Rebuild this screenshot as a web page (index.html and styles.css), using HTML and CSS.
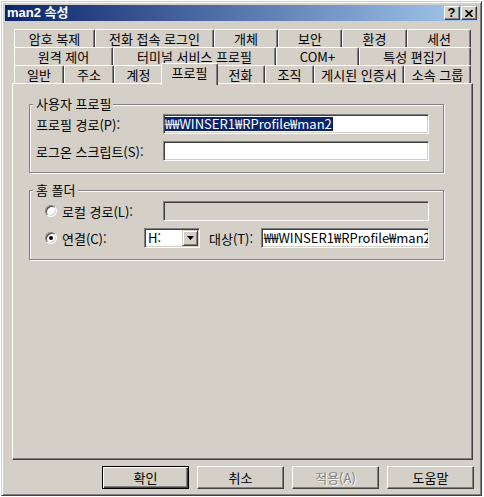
FILE: index.html
```html
<!DOCTYPE html>
<html lang="ko">
<head>
<meta charset="utf-8">
<title>man2 속성</title>
<link rel="stylesheet" href="styles.css">
</head>
<body>
<div class="desktop">
  <div class="window">
    <div class="titlebar">
      <span class="title">man2 속성</span>
      <div class="caption-btns">
        <span class="cap-btn help">?</span>
        <span class="cap-btn close"><svg width="8" height="7" viewBox="0 0 8 7"><path d="M0.5 0 L7.5 7 M7.5 0 L0.5 7" stroke="#000" stroke-width="1.7" fill="none"/></svg></span>
      </div>
    </div>
    <div class="client">
      <div class="tabs">
        <div class="tabrow row1">
          <div class="tab">암호 복제</div>
          <div class="tab">전화 접속 로그인</div>
          <div class="tab">개체</div>
          <div class="tab">보안</div>
          <div class="tab">환경</div>
          <div class="tab">세션</div>
        </div>
        <div class="tabrow row2">
          <div class="tab">원격 제어</div>
          <div class="tab">터미널 서비스 프로필</div>
          <div class="tab">COM+</div>
          <div class="tab">특성 편집기</div>
        </div>
        <div class="tabrow row3">
          <div class="tab">일반</div>
          <div class="tab">주소</div>
          <div class="tab">계정</div>
          <div class="tab active">프로필</div>
          <div class="tab">전화</div>
          <div class="tab">조직</div>
          <div class="tab">게시된 인증서</div>
          <div class="tab">소속 그룹</div>
        </div>
      </div>
      <div class="panel">
        <div class="group g1">
          <div class="legend">사용자 프로필</div>
          <div class="row first">
            <span class="label">프로필 경로(P):</span>
            <div class="field w-main"><span class="sel">₩₩WINSER1₩RProfile₩man2</span></div>
          </div>
          <div class="row">
            <span class="label">로그온 스크립트(S):</span>
            <div class="field w-main"></div>
          </div>
        </div>
        <div class="group g2">
          <div class="legend">홈 폴더</div>
          <div class="row first">
            <span class="radio-label"><span class="radio"></span>로컬 경로(L):</span>
            <div class="field w-main disabled"></div>
          </div>
          <div class="row">
            <span class="radio-label short"><span class="radio checked"></span>연결(C):</span>
            <div class="combo">
              <span class="combo-text">H:</span>
              <span class="drop"><svg width="7" height="4" viewBox="0 0 7 4"><path d="M0 0 H7 L3.5 4 Z" fill="#000"/></svg></span>
            </div>
            <span class="label target">대상(T):</span>
            <div class="field w-target">₩₩WINSER1₩RProfile₩man2</div>
          </div>
        </div>
      </div>
      <div class="buttons">
        <div class="btn default">확인</div>
        <div class="btn">취소</div>
        <div class="btn disabled">적용(A)</div>
        <div class="btn">도움말</div>
      </div>
    </div>
  </div>
</div>
</body>
</html>
```

FILE: styles.css
```css
* { box-sizing: border-box; }
html, body { margin: 0; padding: 0; }
body {
  width: 484px;
  height: 497px;
  overflow: hidden;
  background: #ffffff;
  font-family: "Noto Sans CJK KR", "Noto Sans", sans-serif;
  font-size: 13px;
  line-height: 15px;
  color: #000;
}
.desktop { padding: 1px 0 0 1px; }

.window {
  width: 481px;
  height: 495px;
  background: #d4d0c8;
  border: 1px solid;
  border-color: #d4d0c8 #404040 #404040 #d4d0c8;
  box-shadow: inset 1px 1px #ffffff, inset -1px -1px #808080;
  padding: 3px;
  display: flex;
  flex-direction: column;
}

.titlebar {
  height: 16px;
  flex: none;
  display: flex;
  align-items: center;
  padding-left: 2px;
  background: linear-gradient(to right, #0a246a, #a6caf0);
}
.title {
  color: #fff;
  font-family: "Liberation Sans", "Noto Sans CJK KR", sans-serif;
  font-weight: bold;
  font-size: 13px;
  line-height: 16px;
  white-space: nowrap;
}
.caption-btns {
  margin-left: auto;
  margin-right: 1px;
  display: flex;
  gap: 1px;
}
.cap-btn {
  width: 16px;
  height: 14px;
  background: #d4d0c8;
  border: 1px solid;
  border-color: #ffffff #404040 #404040 #ffffff;
  box-shadow: inset -1px -1px #808080;
  display: flex;
  align-items: center;
  justify-content: center;
}
.help {
  font-family: "Liberation Sans", sans-serif;
  font-weight: bold;
  font-size: 13px;
  line-height: 12px;
  padding-right: 1px;
}
.close svg { display: block; margin-right: 1px; }

.client {
  flex: 1;
  padding: 8px 5px 0 7px;
  display: flex;
  flex-direction: column;
}

.tabs { padding: 0 2px; }
.tabrow { display: flex; height: 18px; }
.tab {
  height: 18px;
  flex: none;
  background: #d4d0c8;
  border-top: 1px solid #ffffff;
  border-left: 1px solid #ffffff;
  border-right: 1px solid #404040;
  box-shadow: inset -1px 0 #808080;
  border-radius: 2px 2px 0 0;
  text-align: center;
  line-height: 14px;
  padding-top: 2px;
  white-space: nowrap;
}
.row1 .tab:nth-child(1) { width: 81px; }
.row1 .tab:nth-child(2) { width: 119px; }
.row1 .tab:nth-child(3) { width: 64px; }
.row1 .tab:nth-child(4) { width: 64px; }
.row1 .tab:nth-child(5) { width: 65px; }
.row1 .tab:nth-child(6) { width: 64px; }
.row2 .tab:nth-child(1) { width: 99px; }
.row2 .tab:nth-child(2) { width: 163px; }
.row2 .tab:nth-child(3) { width: 83px; }
.row2 .tab:nth-child(4) { width: 112px; }
.row3 .tab:nth-child(1) { width: 50px; }
.row3 .tab:nth-child(2) { width: 50px; }
.row3 .tab:nth-child(3) { width: 49px; }
.row3 .tab:nth-child(4) { width: 57px; }
.row3 .tab:nth-child(5) { width: 49px; }
.row3 .tab:nth-child(6) { width: 49px; }
.row3 .tab:nth-child(7) { width: 90px; }
.row3 .tab:nth-child(8) { width: 67px; }
.tab.active {
  position: relative;
  z-index: 1;
  height: 22px;
  margin: -2px -2px 0 -2px;
}

.panel {
  width: 461px;
  height: 377px;
  flex: none;
  border: 1px solid;
  border-color: #ffffff #404040 #404040 #ffffff;
  box-shadow: inset -1px -1px #808080;
  padding: 0 0 0 16px;
}

.group {
  width: 415px;
  border: 1px solid #808080;
  box-shadow: inset 1px 1px #ffffff, 1px 1px #ffffff;
  padding: 0 0 11px 6px;
}
.g1 { margin-top: 20px; }
.g2 { margin-top: 17px; }
.legend {
  width: fit-content;
  height: 14px;
  line-height: 14px;
  margin: -8px 0 0 -3px;
  padding: 0 2px 0 3px;
  background: #d4d0c8;
  white-space: nowrap;
}

.row {
  display: flex;
  align-items: center;
  height: 20px;
  margin-top: 7px;
}
.row.first { margin-top: 3px; }
.g2 .row.first { margin-top: 4px; }

.label {
  width: 127px;
  flex: none;
  white-space: nowrap;
}
.label.target { width: 52px; margin-left: 9px; }

.field {
  height: 20px;
  flex: none;
  background: #ffffff;
  border: 1px solid;
  border-color: #808080 #ffffff #ffffff #808080;
  box-shadow: inset 1px 1px #404040, inset -1px -1px #d4d0c8;
  padding: 0 1px;
  display: flex;
  align-items: center;
  overflow: hidden;
  white-space: nowrap;
  line-height: 14px;
}
.field.disabled { background: #d4d0c8; }
.w-main { width: 266px; }
.w-target { width: 168px; padding-left: 2px; }
.sel {
  background: #0a246a;
  color: #ffffff;
  padding-right: 1px;
}

.radio-label {
  width: 127px;
  flex: none;
  display: flex;
  align-items: center;
  gap: 5px;
  padding-left: 9px;
  white-space: nowrap;
}
.radio-label.short { width: 108px; }
.radio {
  width: 12px;
  height: 12px;
  flex: none;
  border-radius: 50%;
  background: #ffffff;
  border: 1px solid;
  border-color: #808080 #ffffff #ffffff #808080;
  box-shadow: inset 1px 1px #404040, inset -1px -1px #d4d0c8;
  display: flex;
  align-items: center;
  justify-content: center;
}
.radio.checked::after {
  content: "";
  width: 4px;
  height: 4px;
  border-radius: 50%;
  background: #000;
}

.combo {
  width: 56px;
  height: 20px;
  flex: none;
  background: #ffffff;
  border: 1px solid;
  border-color: #808080 #ffffff #ffffff #808080;
  box-shadow: inset 1px 1px #404040, inset -1px -1px #d4d0c8;
  padding: 1px;
  display: flex;
  align-items: center;
}
.combo-text { flex: 1; padding-left: 2px; line-height: 14px; }
.drop {
  width: 16px;
  height: 16px;
  flex: none;
  background: #d4d0c8;
  border: 1px solid;
  border-color: #d4d0c8 #404040 #404040 #d4d0c8;
  box-shadow: inset 1px 1px #ffffff, inset -1px -1px #808080;
  display: flex;
  align-items: center;
  justify-content: center;
}
.drop svg { display: block; }

.buttons {
  display: flex;
  justify-content: flex-end;
  gap: 8px;
  margin-top: 6px;
  margin-right: -1px;
}
.btn {
  width: 87px;
  height: 23px;
  background: #d4d0c8;
  border: 1px solid;
  border-color: #ffffff #404040 #404040 #ffffff;
  box-shadow: inset -1px -1px #808080;
  display: flex;
  align-items: center;
  justify-content: center;
  line-height: 14px;
}
.btn.default {
  border-color: #000000;
  box-shadow: inset 1px 1px #ffffff, inset -1px -1px #404040, inset -2px -2px #808080;
}
.btn.disabled {
  color: #808080;
  text-shadow: 1px 1px #ffffff;
}
```
